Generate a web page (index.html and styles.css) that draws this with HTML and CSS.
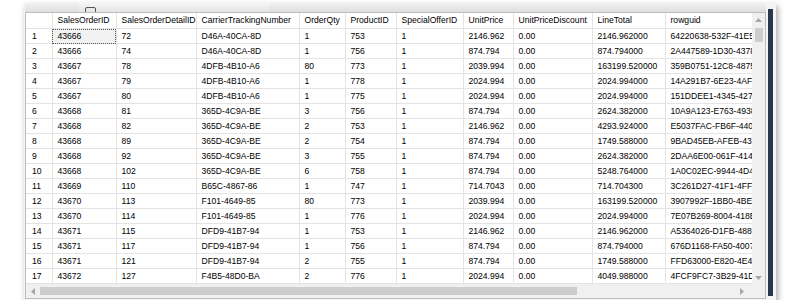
FILE: index.html
```html
<!DOCTYPE html>
<html>
<head>
<title>Results</title>
<link rel="stylesheet" href="styles.css">
</head>
<body>
<div class="window">
<div class="main">
<div class="tabstrip"><span class="tab"><span class="tab-icon"></span></span></div>
<div class="panel">
<div class="grid-area">
<table class="results">
<colgroup>
<col style="width:26px"><col style="width:64px"><col style="width:80px"><col style="width:103px">
<col style="width:46px"><col style="width:51px"><col style="width:67px"><col style="width:50px">
<col style="width:79px"><col style="width:73px"><col style="width:120px">
</colgroup>
<thead>
<tr><th></th><th>SalesOrderID</th><th>SalesOrderDetailID</th><th>CarrierTrackingNumber</th><th>OrderQty</th><th>ProductID</th><th>SpecialOfferID</th><th>UnitPrice</th><th>UnitPriceDiscount</th><th>LineTotal</th><th>rowguid</th></tr>
</thead>
<tbody>
<tr><td class="nr">1</td><td class="focus">43666</td><td>72</td><td>D46A-40CA-8D</td><td>1</td><td>753</td><td>1</td><td>2146.962</td><td>0.00</td><td>2146.962000</td><td>64220638-532F-41E5-AE8F-05DA3EE0B5E1</td></tr>
<tr><td class="nr">2</td><td>43666</td><td>74</td><td>D46A-40CA-8D</td><td>1</td><td>756</td><td>1</td><td>874.794</td><td>0.00</td><td>874.794000</td><td>2A447589-1D30-4378-9C01-F5AB3B2E2A43</td></tr>
<tr><td class="nr">3</td><td>43667</td><td>78</td><td>4DFB-4B10-A6</td><td>80</td><td>773</td><td>1</td><td>2039.994</td><td>0.00</td><td>163199.520000</td><td>359B0751-12C8-4875-B5C4-24C8A2D8A0E5</td></tr>
<tr><td class="nr">4</td><td>43667</td><td>79</td><td>4DFB-4B10-A6</td><td>1</td><td>778</td><td>1</td><td>2024.994</td><td>0.00</td><td>2024.994000</td><td>14A291B7-6E23-4AF4-8C3D-1B0E2F6A7C90</td></tr>
<tr><td class="nr">5</td><td>43667</td><td>80</td><td>4DFB-4B10-A6</td><td>1</td><td>775</td><td>1</td><td>2024.994</td><td>0.00</td><td>2024.994000</td><td>151DDEE1-4345-4277-A2B8-5C1E2D3F4A6B</td></tr>
<tr><td class="nr">6</td><td>43668</td><td>81</td><td>365D-4C9A-BE</td><td>3</td><td>756</td><td>1</td><td>874.794</td><td>0.00</td><td>2624.382000</td><td>10A9A123-E763-4938-B1F2-6D4C2A1E9F07</td></tr>
<tr><td class="nr">7</td><td>43668</td><td>82</td><td>365D-4C9A-BE</td><td>2</td><td>753</td><td>1</td><td>2146.962</td><td>0.00</td><td>4293.924000</td><td>E5037FAC-FB6F-4407-A8C5-2B9D6E1F3A40</td></tr>
<tr><td class="nr">8</td><td>43668</td><td>89</td><td>365D-4C9A-BE</td><td>2</td><td>754</td><td>1</td><td>874.794</td><td>0.00</td><td>1749.588000</td><td>9BAD45EB-AFEB-4316-9D3A-7E1C5B2F8A64</td></tr>
<tr><td class="nr">9</td><td>43668</td><td>92</td><td>365D-4C9A-BE</td><td>3</td><td>755</td><td>1</td><td>874.794</td><td>0.00</td><td>2624.382000</td><td>2DAA6E00-061F-4148-B6E7-3A2C9D1F5E08</td></tr>
<tr><td class="nr">10</td><td>43668</td><td>102</td><td>365D-4C9A-BE</td><td>6</td><td>758</td><td>1</td><td>874.794</td><td>0.00</td><td>5248.764000</td><td>1A0C02EC-9944-4D45-A1B3-8F6E2C7D9B21</td></tr>
<tr><td class="nr">11</td><td>43669</td><td>110</td><td>B65C-4867-86</td><td>1</td><td>747</td><td>1</td><td>714.7043</td><td>0.00</td><td>714.704300</td><td>3C261D27-41F1-4FF4-9E2A-5B7C1D8F3A62</td></tr>
<tr><td class="nr">12</td><td>43670</td><td>113</td><td>F101-4649-85</td><td>80</td><td>773</td><td>1</td><td>2039.994</td><td>0.00</td><td>163199.520000</td><td>3907992F-1BB0-4BE6-8C4D-2E9A7F1B5C38</td></tr>
<tr><td class="nr">13</td><td>43670</td><td>114</td><td>F101-4649-85</td><td>1</td><td>776</td><td>1</td><td>2024.994</td><td>0.00</td><td>2024.994000</td><td>7E07B269-8004-418E-B2F6-4C1D9A3E7F50</td></tr>
<tr><td class="nr">14</td><td>43671</td><td>115</td><td>DFD9-41B7-94</td><td>1</td><td>753</td><td>1</td><td>2146.962</td><td>0.00</td><td>2146.962000</td><td>A5364026-D1FB-4889-A3C7-6E2B8D1F4A95</td></tr>
<tr><td class="nr">15</td><td>43671</td><td>117</td><td>DFD9-41B7-94</td><td>1</td><td>756</td><td>1</td><td>874.794</td><td>0.00</td><td>874.794000</td><td>676D1168-FA50-4007-9B5E-3C1A7D2F8E46</td></tr>
<tr><td class="nr">16</td><td>43671</td><td>121</td><td>DFD9-41B7-94</td><td>2</td><td>755</td><td>1</td><td>874.794</td><td>0.00</td><td>1749.588000</td><td>FFD63000-E820-4E45-A4C1-9B2D6E3F7A18</td></tr>
<tr><td class="nr">17</td><td>43672</td><td>127</td><td>F4B5-48D0-BA</td><td>2</td><td>776</td><td>1</td><td>2024.994</td><td>0.00</td><td>4049.988000</td><td>4FCF9FC7-3B29-41D3-8E6A-1C5B9D2F7A03</td></tr>
</tbody>
</table>
</div>
<div class="vscroll">
<svg class="arrow" width="7" height="4" viewBox="0 0 7 4"><polygon points="0,4 3.5,0 7,4"/></svg>
<div class="vthumb"></div>
<div class="vspace"></div>
<svg class="arrow" width="7" height="4" viewBox="0 0 7 4"><polygon points="0,0 3.5,4 7,0"/></svg>
</div>
<div class="hscroll">
<svg class="arrow" width="4" height="7" viewBox="0 0 4 7"><polygon points="4,0 0,3.5 4,7"/></svg>
<div class="hthumb"></div>
<svg class="arrow" width="4" height="7" viewBox="0 0 4 7"><polygon points="0,0 4,3.5 0,7"/></svg>
</div>
<div class="corner"></div>
</div>
</div>
<div class="edge"></div>
</div>
</body>
</html>
```

FILE: styles.css
```css
/* Result grid snapshot */

body
{ margin: 0;
background: #fff;
font-family: "Liberation Sans", Arial, sans-serif;
font-size: 8.6px;
color: #000;
}

div.window
{ margin: 3px 0 0 24px;
width: 752px;
height: 297px;
display: flex;
background: #f4f4f4;
box-shadow: 2px 3px 6px rgba(0,0,0,0.35);
}

div.main
{ padding-left: 1px;
display: flex;
flex-direction: column;
}

div.tabstrip
{ height: 9px;
background: linear-gradient(#f2f2f2, #dedede);
display: flex;
}

span.tab
{ margin-left: 54px;
width: 190px;
background: linear-gradient(#f6f6f6, #e4e4e4);
position: relative;
overflow: hidden;
}

span.tab-icon
{ position: absolute;
left: 6px;
top: 4px;
width: 9px;
height: 8px;
border: 1px solid #555;
border-radius: 2px;
}

div.panel
{ border: 1px solid #bdbdbd;
display: grid;
grid-template-columns: 726px 13px;
grid-template-rows: 271px 14px;
background: #fff;
}

div.grid-area
{ overflow: hidden;
}

/* Table */

table.results
{ table-layout: fixed;
border-collapse: collapse;
width: 759px;
}

table.results th, table.results td
{ height: 14px;
padding: 0 0 0 5px;
border-right: 1px solid #e4e4e4;
border-bottom: 1px solid #e4e4e4;
white-space: nowrap;
overflow: hidden;
text-align: left;
font-weight: normal;
line-height: 14px;
}

table.results th
{ height: 15px;
line-height: 15px;
}

table.results td.nr
{ padding-left: 6px;
}

table.results td.focus
{ background: #f2f2f2;
outline: 1px dotted #555;
outline-offset: -1px;
}

/* Scrollbars */

div.vscroll
{ background: #f0f0f0;
display: flex;
flex-direction: column;
align-items: center;
padding: 5px 0 4px;
}

div.vthumb
{ margin-top: 6px;
width: 8px;
height: 14px;
background: #cdcdcd;
}

div.vspace
{ flex: 1;
}

div.hscroll
{ background: #f0f0f0;
display: flex;
align-items: center;
padding: 0 8px 0 5px;
}

div.hthumb
{ margin-left: 5px;
width: 537px;
height: 8px;
background: #cdcdcd;
margin-right: auto;
}

div.corner
{ background: #f0f0f0;
}

svg.arrow
{ fill: #a6a6a6;
display: block;
}

div.edge
{ margin: 6px 3px 4px 2px;
width: 5px;
background: #2a3550;
}
```
